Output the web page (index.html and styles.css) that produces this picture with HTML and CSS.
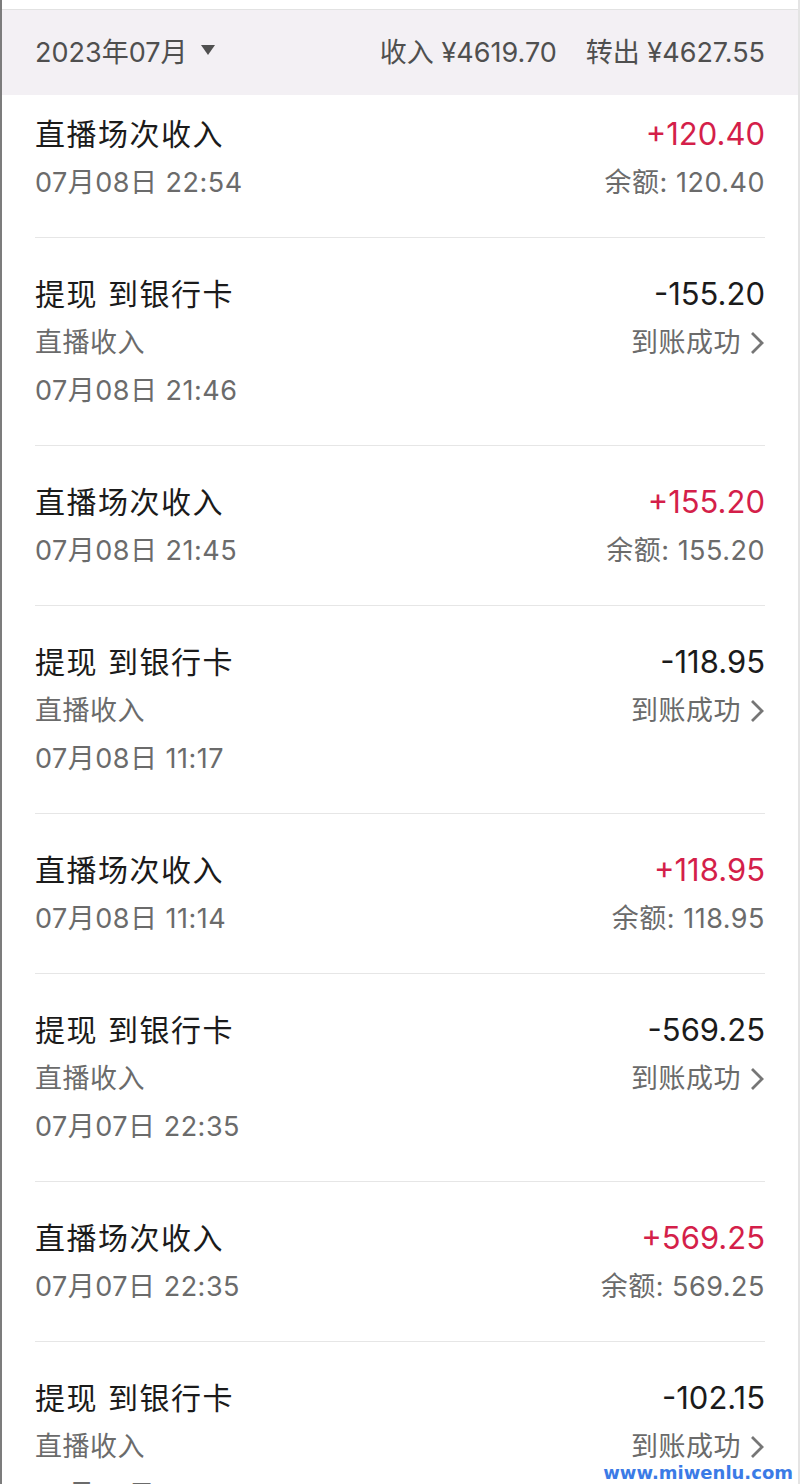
FILE: index.html
```html
<!DOCTYPE html>
<html lang="zh">
<head>
  <meta charset="UTF-8">
  <title>账单明细</title>
  <link rel="stylesheet" href="styles.css">
</head>
<body>

<div class="page">
  <div class="topline"></div>

  <div class="summary">
    <div class="month">2023年07月 <span class="caret"></span></div>
    <div class="totals">
      <span>收入 ¥4619.70</span>
      <span>转出 ¥4627.55</span>
    </div>
  </div>

  <div class="list">
    <div class="row first">
      <div class="left">
        <div class="title">直播场次收入</div>
        <div class="sub">07月08日 22:54</div>
      </div>
      <div class="right">
        <div class="amount plus">+120.40</div>
        <div class="sub">余额: 120.40</div>
      </div>
    </div>

    <div class="row">
      <div class="left">
        <div class="title">提现 到银行卡</div>
        <div class="sub">直播收入</div>
        <div class="sub">07月08日 21:46</div>
      </div>
      <div class="right">
        <div class="amount">-155.20</div>
        <div class="sub status">到账成功<svg width="16" height="24" viewBox="0 0 16 24"><polyline points="3,2 13,12 3,22" fill="none" stroke="#767676" stroke-width="2.8"/></svg></div>
      </div>
    </div>

    <div class="row">
      <div class="left">
        <div class="title">直播场次收入</div>
        <div class="sub">07月08日 21:45</div>
      </div>
      <div class="right">
        <div class="amount plus">+155.20</div>
        <div class="sub">余额: 155.20</div>
      </div>
    </div>

    <div class="row">
      <div class="left">
        <div class="title">提现 到银行卡</div>
        <div class="sub">直播收入</div>
        <div class="sub">07月08日 11:17</div>
      </div>
      <div class="right">
        <div class="amount">-118.95</div>
        <div class="sub status">到账成功<svg width="16" height="24" viewBox="0 0 16 24"><polyline points="3,2 13,12 3,22" fill="none" stroke="#767676" stroke-width="2.8"/></svg></div>
      </div>
    </div>

    <div class="row">
      <div class="left">
        <div class="title">直播场次收入</div>
        <div class="sub">07月08日 11:14</div>
      </div>
      <div class="right">
        <div class="amount plus">+118.95</div>
        <div class="sub">余额: 118.95</div>
      </div>
    </div>

    <div class="row">
      <div class="left">
        <div class="title">提现 到银行卡</div>
        <div class="sub">直播收入</div>
        <div class="sub">07月07日 22:35</div>
      </div>
      <div class="right">
        <div class="amount">-569.25</div>
        <div class="sub status">到账成功<svg width="16" height="24" viewBox="0 0 16 24"><polyline points="3,2 13,12 3,22" fill="none" stroke="#767676" stroke-width="2.8"/></svg></div>
      </div>
    </div>

    <div class="row">
      <div class="left">
        <div class="title">直播场次收入</div>
        <div class="sub">07月07日 22:35</div>
      </div>
      <div class="right">
        <div class="amount plus">+569.25</div>
        <div class="sub">余额: 569.25</div>
      </div>
    </div>

    <div class="row">
      <div class="left">
        <div class="title">提现 到银行卡</div>
        <div class="sub">直播收入</div>
        <div class="sub">07月07日 14:02</div>
      </div>
      <div class="right">
        <div class="amount">-102.15</div>
        <div class="sub status">到账成功<svg width="16" height="24" viewBox="0 0 16 24"><polyline points="3,2 13,12 3,22" fill="none" stroke="#767676" stroke-width="2.8"/></svg></div>
      </div>
    </div>
  </div>

  <div class="watermark">www.miwenlu.com</div>
</div>

</body>
</html>
```

FILE: styles.css
```css
body {
  margin: 0;
  background: #fff;
  font-family: Inter, "Noto Sans CJK SC", sans-serif;
}
.page {
  position: relative;
  height: 1484px;
  overflow: hidden;
  border-left: 2px solid #7c7c7c;
  border-right: 2px solid #e4e4e4;
  box-sizing: border-box;
  background: #fff;
}
.topline {
  height: 10px;
  border-bottom: 1px solid #e2e2e2;
  box-sizing: border-box;
}
.summary {
  height: 85px;
  background: #f3f0f4;
  display: flex;
  align-items: center;
  justify-content: space-between;
  padding: 0 33px 5px 33px;
  box-sizing: border-box;
  font-size: 27px;
  color: #4f4f4f;
}
.month {
  display: flex;
  align-items: center;
}
.caret {
  width: 0;
  height: 0;
  margin-left: 14px;
  border-left: 7px solid transparent;
  border-right: 7px solid transparent;
  border-top: 10px solid #505050;
}
.totals {
  display: flex;
  gap: 29px;
}
.list {
  padding: 0 33px;
}
.row {
  display: flex;
  justify-content: space-between;
  padding: 31px 0 30px;
  border-bottom: 1px solid #e6e6e6;
}
.row.first {
  padding-top: 14px;
}
.title {
  font-size: 30px;
  line-height: 50px;
  color: #1b1b1b;
  letter-spacing: 1.5px;
}
.sub {
  font-size: 27px;
  line-height: 48px;
  color: #6b6b6b;
  letter-spacing: 0.5px;
}
.right {
  text-align: right;
}
.amount {
  font-size: 31px;
  line-height: 50px;
  color: #1b1b1b;
}
.amount.plus {
  color: #d41f4a;
}
.status {
  display: flex;
  align-items: center;
  justify-content: flex-end;
  gap: 8px;
}
.watermark {
  position: absolute;
  right: 3px;
  bottom: 1px;
  font-family: "DejaVu Sans", sans-serif;
  font-weight: bold;
  font-size: 18px;
  line-height: 20px;
  color: #3b7be6;
  background: #fff;
  padding: 0 2px;
}
```
